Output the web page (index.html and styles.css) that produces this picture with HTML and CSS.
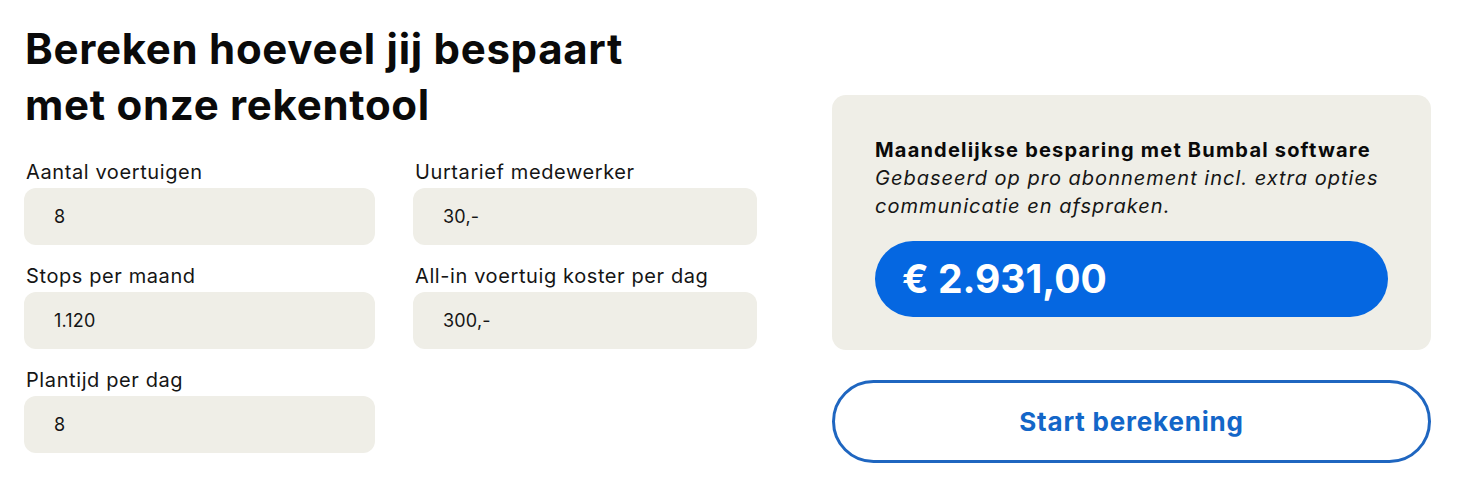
FILE: index.html
```html
<!DOCTYPE html>
<html lang="nl">
<head>
    <meta charset="UTF-8">
    <meta name="viewport" content="width=device-width, initial-scale=1.0">
    <title>Rekentool</title>
    <link rel="stylesheet" href="styles.css">
</head>
<body>
    <div class="calculator">
        <div class="inputs">
            <h1>Bereken hoeveel jij bespaart<br>met onze rekentool</h1>
            <div class="fields">
                <label class="field">
                    <span class="label">Aantal voertuigen</span>
                    <input class="value" type="text" value="8">
                </label>
                <label class="field">
                    <span class="label">Uurtarief medewerker</span>
                    <input class="value" type="text" value="30,-">
                </label>
                <label class="field">
                    <span class="label">Stops per maand</span>
                    <input class="value" type="text" value="1.120">
                </label>
                <label class="field">
                    <span class="label">All-in voertuig koster per dag</span>
                    <input class="value" type="text" value="300,-">
                </label>
                <label class="field">
                    <span class="label">Plantijd per dag</span>
                    <input class="value" type="text" value="8">
                </label>
            </div>
        </div>
        <div class="result">
            <div class="result-card">
                <p class="result-title">Maandelijkse besparing met Bumbal software</p>
                <p class="result-note">Gebaseerd op pro abonnement incl. extra opties communicatie en afspraken.</p>
                <div class="amount">€ 2.931,00</div>
            </div>
            <button class="start" type="button">Start berekening</button>
        </div>
    </div>
</body>
</html>
```

FILE: styles.css
```css
body {
    margin: 0;
    font-family: Inter, "Noto Sans", sans-serif;
    color: #111;
    background: #fff;
}
.calculator {
    display: flex;
    gap: 75px;
    padding: 21px 0 0 24px;
}
.inputs {
    width: 733px;
}
h1 {
    margin: 0 0 25px 1px;
    font-size: 42px;
    line-height: 56px;
    font-weight: 700;
    letter-spacing: 0.7px;
    color: #0a0a0a;
}
.fields {
    display: grid;
    grid-template-columns: 351px 344px;
    column-gap: 38px;
    row-gap: 17px;
}
.field {
    display: flex;
    flex-direction: column;
}
.label {
    font-size: 20px;
    line-height: 24px;
    letter-spacing: 0.6px;
    margin: 2px 0 4px 2px;
    color: #151515;
}
.value {
    height: 57px;
    box-sizing: border-box;
    border: none;
    border-radius: 12px;
    background: #efeee7;
    padding: 0 0 0 30px;
    font: inherit;
    font-size: 18px;
    letter-spacing: 0.2px;
    color: #151515;
    outline: none;
}
.result {
    width: 599px;
    margin-top: 74px;
}
.result-card {
    background: #efeee7;
    border-radius: 14px;
    padding: 41px 43px 33px;
}
.result-title,
.result-note {
    margin: 0;
    font-size: 20px;
    line-height: 28px;
    letter-spacing: 1px;
}
.result-title {
    font-weight: 700;
    letter-spacing: 1.2px;
    color: #0a0a0a;
}
.result-note {
    font-style: italic;
    color: #151515;
}
.amount {
    margin-top: 21px;
    height: 76px;
    border-radius: 38px;
    background: #0567e1;
    color: #fff;
    font-size: 39px;
    font-weight: 700;
    line-height: 76px;
    padding-left: 27px;
}
.start {
    display: block;
    width: 100%;
    height: 83px;
    margin-top: 30px;
    border: 3px solid #1f66c0;
    border-radius: 42px;
    background: #fff;
    color: #1366c8;
    font: inherit;
    font-size: 26px;
    font-weight: 700;
    letter-spacing: 0.8px;
    cursor: pointer;
}
```
